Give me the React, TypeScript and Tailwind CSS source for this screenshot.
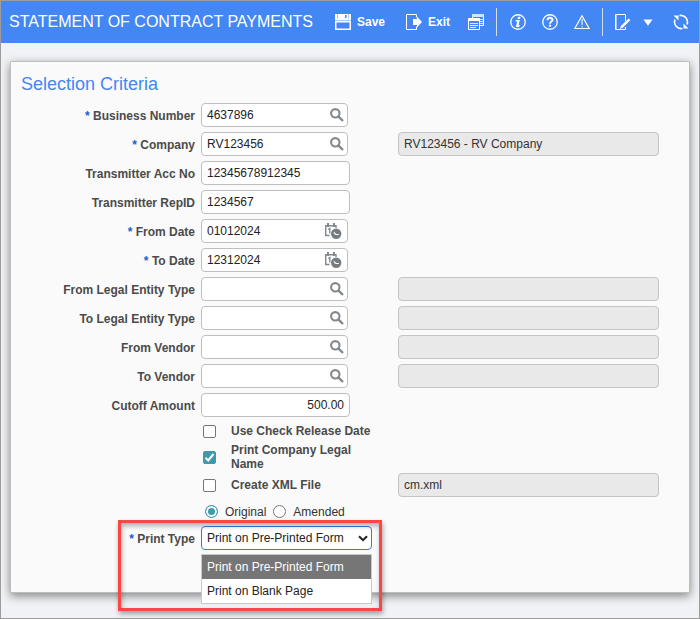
import { useState } from "react";
import type { ReactNode } from "react";
import { clsx } from "clsx";

const printTypes = ["Print on Pre-Printed Form", "Print on Blank Page"];

function SaveIcon() {
  return (
    <svg width="16" height="16" viewBox="0 0 16 16" fill="none">
      <path d="M0 0h16v16H0z M1.500 8.500v6h13v-6z" fill="#fff" fillRule="evenodd" />
      <path d="M0 6h16v1H0z" fill="#a9c9fb" />
      <path d="M2 0h1v5H2zM13 0h1v5h-1z" fill="#a9c9fb" />
      <path d="M10 1h1.500v3H10z" fill="#4387f4" />
    </svg>
  );
}

function ExitIcon() {
  return (
    <svg width="16" height="16" viewBox="0 0 16 16" fill="none">
      <path d="M10.500 3.500V.5H.5v15h10v-3" stroke="#fff" />
      <path d="M7 5h4V2.500L16 8l-5 5.500V11H7z" fill="#fff" />
    </svg>
  );
}

function WindowsIcon() {
  return (
    <svg width="16" height="16" viewBox="0 0 16 16" fill="none">
      <path d="M4.500 4V.5h11v11H12" stroke="#fff" />
      <path d="M4 0h12v3H4zM12 5h3v1h-3zM12 7h3v1h-3zM12 9h3v1h-3z" fill="#d3e2fd" />
      <path d="M.5 4.500h11v11H.5z" fill="#4387f4" stroke="#fff" />
      <path d="M0 4h12v3H0z" fill="#fff" />
      <path d="M2 9h8v1H2zM2 11h8v1H2zM2 13h6v1H2z" fill="#e1ebfe" />
    </svg>
  );
}

function InfoIcon() {
  return (
    <svg width="16" height="16" viewBox="0 0 16 16" fill="none">
      <circle cx="8" cy="8" r="7.250" stroke="#fff" strokeWidth="1.300" />
      <path d="M8 2.700h2.500l-.5 2.200H7.500zM5.800 6h4L8.500 11.400l1.600-.5-.3 1.400c-1.100.8-2.500 1-3.900.7l1.300-5.500-1.700.1z" fill="#fff" />
    </svg>
  );
}

function HelpIcon() {
  return (
    <svg width="16" height="16" viewBox="0 0 16 16" fill="none">
      <circle cx="8" cy="8" r="7.250" stroke="#fff" strokeWidth="1.300" />
      <path d="M5.500 6.200c0-3.200 5-3 5-.4C10.500 7.500 8 7.500 8 9.700" stroke="#fff" strokeWidth="2" />
      <path d="M6.900 10.700h2.200v2H6.900z" fill="#fff" />
    </svg>
  );
}

function WarningIcon() {
  return (
    <svg width="16" height="16" viewBox="0 0 16 16" fill="none">
      <path d="M8 1.800 15.200 14.500H.8z" stroke="#fff" strokeWidth="1.200" />
      <path d="M7.400 5h1.400v6H7.400zM7.400 12h1.400v1.200H7.400z" fill="#d3e2fd" />
    </svg>
  );
}

function NoteIcon() {
  return (
    <svg width="16" height="16" viewBox="0 0 16 16" fill="none">
      <path d="M10.500 7V.5H.5v15h10V13" stroke="#fff" />
      <path d="M1.500 1v14" stroke="#a9c9fb" />
      <path d="M13.600 4.600 15.300 6.300 8 13.600l-3.200 1.300L6.100 11.800z" fill="#fff" />
    </svg>
  );
}

function RefreshIcon() {
  return (
    <svg width="16" height="16" viewBox="0 0 16 16" fill="none">
      <path d="M6.500 1.500A6.700 6.700 0 0 1 14 10.500M9.500 14.500A6.700 6.700 0 0 1 2 5.500" stroke="#fff" strokeWidth="1.600" />
      <path d="M.5 1.500h5v5zM15.500 14.500h-5v-5z" fill="#fff" />
    </svg>
  );
}

function SearchIcon() {
  return (
    <svg width="14" height="14" viewBox="0 0 14 14" fill="none">
      <circle cx="5.300" cy="5.300" r="4.200" stroke="#83888c" strokeWidth="2.100" />
      <path d="m8.300 8.300 4.700 4.700" stroke="#83888c" strokeWidth="2.400" />
    </svg>
  );
}

function CalendarIcon() {
  return (
    <svg width="17" height="16" viewBox="0 0 17 16" fill="none">
      <path d="M.7 13V2.700H11V5M0 12.500h4.500" stroke="#83888c" strokeWidth="1.400" />
      <path d="M2 0h2v4H2zM8 0h2v4H8z" fill="#83888c" />
      <path d="M3.200 6.500 4.800 5.500V10.500" stroke="#83888c" strokeWidth="1.400" />
      <circle cx="11.200" cy="10.700" r="5.200" fill="#777c80" />
      <path d="M8.800 9.500 10.800 11.500h3" stroke="#fafafa" strokeWidth="1.200" />
    </svg>
  );
}

interface ToolButtonProps {
  title: string;
  label?: string;
  className?: string;
  children: ReactNode;
}

function ToolButton({ title, label, className, children }: ToolButtonProps) {
  return (
    <button
      type="button"
      title={title}
      aria-label={title}
      className={clsx("flex shrink-0 items-center gap-1.5 text-xs font-bold text-white", className)}
    >
      {children}
      {label}
    </button>
  );
}

function Divider({ className }: { className?: string }) {
  return <div className={clsx("h-7 w-px shrink-0 bg-[#d0e0fc]", className)} />;
}

function Toolbar() {
  return (
    <header className="flex h-[42px] items-center bg-[#4387f4] pr-2.5 pl-2">
      <h1 className="shrink-0 text-base whitespace-nowrap text-white">
        STATEMENT OF CONTRACT PAYMENTS
      </h1>
      <ToolButton title="Save" label="Save" className="ml-[22px]">
        <SaveIcon />
      </ToolButton>
      <ToolButton title="Exit" label="Exit" className="ml-[21px]">
        <ExitIcon />
      </ToolButton>
      <ToolButton title="Windows" className="ml-[18px]">
        <WindowsIcon />
      </ToolButton>
      <Divider className="ml-3" />
      <div className="ml-[13px] flex gap-4">
        <ToolButton title="Information">
          <InfoIcon />
        </ToolButton>
        <ToolButton title="Help">
          <HelpIcon />
        </ToolButton>
        <ToolButton title="Warnings">
          <WarningIcon />
        </ToolButton>
      </div>
      <Divider className="ml-3" />
      <ToolButton title="Notes" className="ml-3">
        <NoteIcon />
      </ToolButton>
      <ToolButton title="More" className="ml-3">
        <svg width="10" height="7" viewBox="0 0 10 7">
          <path d="M.5.500h9L5 6.800z" fill="#fff" />
        </svg>
      </ToolButton>
      <ToolButton title="Refresh" className="ml-auto">
        <RefreshIcon />
      </ToolButton>
    </header>
  );
}

interface RowProps {
  label?: string;
  htmlFor?: string;
  required?: boolean;
  description?: string;
  className?: string;
  children: ReactNode;
}

function Row({ label, htmlFor, required, description, className, children }: RowProps) {
  return (
    <div
      className={clsx(
        "grid grid-cols-[184px_191px_minmax(0,261px)] items-center gap-x-1.5",
        className,
      )}
    >
      <div className="pt-0.5 text-right font-bold text-[#4b4b4b]">
        {label && (
          <label htmlFor={htmlFor}>
            {required && <span className="text-[#1a5fc8]">* </span>}
            {label}
          </label>
        )}
      </div>
      <div>{children}</div>
      {description !== undefined && (
        <input
          readOnly
          aria-label={`${label ?? "File"} description`}
          value={description}
          className="h-6 w-full rounded border border-[#c4c4c4] bg-[#e9e9e9] px-[5px] text-[#333]"
        />
      )}
    </div>
  );
}

interface FieldProps {
  id: string;
  label: string;
  value?: string;
  required?: boolean;
  kind?: "text" | "lookup" | "date" | "amount";
  description?: string;
}

const fields: FieldProps[] = [
  { id: "business-number", label: "Business Number", value: "4637896", required: true, kind: "lookup" },
  { id: "company", label: "Company", value: "RV123456", required: true, kind: "lookup", description: "RV123456 - RV Company" },
  { id: "acc-no", label: "Transmitter Acc No", value: "12345678912345" },
  { id: "rep-id", label: "Transmitter RepID", value: "1234567" },
  { id: "from-date", label: "From Date", value: "01012024", required: true, kind: "date" },
  { id: "to-date", label: "To Date", value: "12312024", required: true, kind: "date" },
  { id: "from-entity", label: "From Legal Entity Type", kind: "lookup", description: "" },
  { id: "to-entity", label: "To Legal Entity Type", kind: "lookup", description: "" },
  { id: "from-vendor", label: "From Vendor", kind: "lookup", description: "" },
  { id: "to-vendor", label: "To Vendor", kind: "lookup", description: "" },
  { id: "cutoff", label: "Cutoff Amount", value: "500.00", kind: "amount" },
];

function Field({ id, label, value = "", required, kind = "text", description }: FieldProps) {
  const hasButton = kind === "lookup" || kind === "date";

  return (
    <Row label={label} htmlFor={id} required={required} description={description}>
      <div
        className={clsx(
          "flex h-6 items-center rounded border border-[#bfbfbf] bg-white pl-[5px]",
          hasButton ? "w-[147px]" : "w-[149px]",
          kind === "lookup" ? "pr-[3px]" : "pr-[5px]",
        )}
      >
        <input
          id={id}
          defaultValue={value}
          className={clsx(
            "w-full min-w-0 bg-transparent text-[#222] outline-none",
            kind === "amount" && "text-right",
          )}
        />
        {hasButton && (
          <button type="button" aria-label={`Choose ${label}`} className="shrink-0">
            {kind === "date" ? <CalendarIcon /> : <SearchIcon />}
          </button>
        )}
      </div>
    </Row>
  );
}

interface CheckOptionProps {
  id: string;
  label: string;
  defaultChecked?: boolean;
}

function CheckOption({ id, label, defaultChecked }: CheckOptionProps) {
  return (
    <div className="flex items-center gap-[15px] pl-0.5 leading-[14px] font-bold text-[#4b4b4b]">
      <span className="relative flex size-[13px] shrink-0">
        <input
          id={id}
          type="checkbox"
          defaultChecked={defaultChecked}
          className="peer size-[13px] appearance-none rounded-[2px] border border-[#767676] bg-white checked:border-[#3f98ab] checked:bg-[#3f98ab]"
        />
        <svg
          viewBox="0 0 13 13"
          fill="none"
          className="pointer-events-none absolute inset-0 hidden size-[13px] peer-checked:block"
        >
          <path d="m2.500 6.800 2.700 2.700 5.300-6.500" stroke="#fff" strokeWidth="2" />
        </svg>
      </span>
      <label htmlFor={id} className="w-[144px]">
        {label}
      </label>
    </div>
  );
}

function RadioOption({ label, defaultChecked }: { label: string; defaultChecked?: boolean }) {
  return (
    <label className="flex items-center gap-[7px] text-[#333]">
      <input
        type="radio"
        name="filing"
        defaultChecked={defaultChecked}
        className="size-[13px] appearance-none rounded-full border border-[#767676] bg-white checked:border-[#3f98ab] checked:bg-[#3f98ab] checked:shadow-[inset_0_0_0_2px_#fff]"
      />
      {label}
    </label>
  );
}

function PrintType() {
  const [selected, setSelected] = useState(printTypes[0]);

  return (
    <div className="relative">
      <Row label="Print Type" htmlFor="print-type" required>
        <div className="relative w-[171px]">
          <select
            id="print-type"
            value={selected}
            onChange={(event) => setSelected(event.target.value)}
            className="h-6 w-full appearance-none rounded border border-[#3b78e7] bg-white px-[5px] text-[#222] outline-none"
          >
            {printTypes.map((type) => (
              <option key={type}>{type}</option>
            ))}
          </select>
          <svg
            width="10"
            height="7"
            viewBox="0 0 10 7"
            fill="none"
            className="pointer-events-none absolute top-[9px] right-1"
          >
            <path d="m1 1.200 4 4 4-4" stroke="#222" strokeWidth="2" />
          </svg>
          <ul
            role="listbox"
            aria-label="Print Type options"
            className="absolute top-7 left-0 z-10 w-full border border-[#c8c8c8] bg-white"
          >
            {printTypes.map((type) => (
              <li
                key={type}
                role="option"
                aria-selected={type === selected}
                onClick={() => setSelected(type)}
                className={clsx(
                  "flex h-6 items-center px-[5px] whitespace-nowrap",
                  type === selected ? "bg-[#767676] text-white" : "text-[#222]",
                )}
              >
                {type}
              </li>
            ))}
          </ul>
        </div>
      </Row>
      <div className="pointer-events-none absolute -top-1.5 left-[107px] z-20 h-[91px] w-[264px] border-3 border-[#fb4646] shadow-[1px_3px_5px_rgba(0,0,0,0.35),inset_1px_3px_5px_rgba(0,0,0,0.3)]" />
    </div>
  );
}

export default function App() {
  return (
    <div className="min-h-screen border border-[#9c9c9c] bg-[#f0f2f5] font-['Liberation_Sans',Arial,sans-serif] text-xs">
      <Toolbar />
      <main className="px-[9px] pt-[18px] pb-6">
        <section className="rounded-[1px] border border-[#bdbdbd] bg-[#fafafa] pb-[42px] shadow-[0_3px_10px_rgba(0,0,0,0.45)]">
          <h2 className="px-2.5 pt-[9px] pb-[5px] text-lg leading-[27px] text-[#4387f4]">
            Selection Criteria
          </h2>
          <form className="flex flex-col gap-[5px]">
            {fields.map((field) => (
              <Field key={field.id} {...field} />
            ))}
            <div className="-mt-px flex flex-col gap-0.5">
              <Row className="h-5">
                <CheckOption id="release-date" label="Use Check Release Date" />
              </Row>
              <Row>
                <CheckOption id="legal-name" label="Print Company Legal Name" defaultChecked />
              </Row>
              <Row description="cm.xml">
                <CheckOption id="create-xml" label="Create XML File" />
              </Row>
              <Row className="h-[25px]">
                <div className="flex gap-[7px] pl-1">
                  <RadioOption label="Original" defaultChecked />
                  <RadioOption label="Amended" />
                </div>
              </Row>
              <PrintType />
            </div>
          </form>
        </section>
      </main>
    </div>
  );
}
